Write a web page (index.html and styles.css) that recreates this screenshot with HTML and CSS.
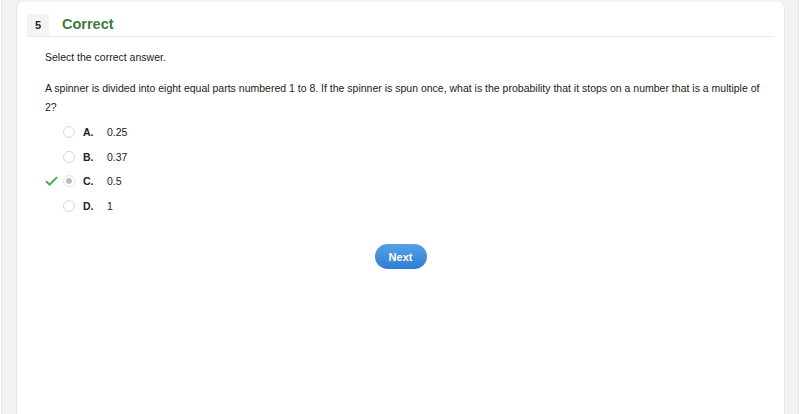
FILE: index.html
```html
<!DOCTYPE html>
<html>
<head>
<meta charset="utf-8">
<link rel="stylesheet" href="styles.css">
</head>
<body>
<div class="frame">
  <div class="card">
    <div class="header">
      <div class="num">5</div>
      <div class="status">Correct</div>
    </div>
    <div class="content">
      <p class="prompt">Select the correct answer.</p>
      <p class="question">A spinner is divided into eight equal parts numbered 1 to 8. If the spinner is spun once, what is the probability that it stops on a number that is a multiple of 2?</p>
      <div class="options">
        <div class="opt"><span class="mark"></span><span class="radio"></span><span class="letter">A.</span><span class="val">0.25</span></div>
        <div class="opt"><span class="mark"></span><span class="radio"></span><span class="letter">B.</span><span class="val">0.37</span></div>
        <div class="opt"><span class="mark"><svg width="13" height="10" viewBox="0 0 13 10"><path d="M1 5.2 L4.6 8.6 L12 1.2" fill="none" stroke="#4caf50" stroke-width="2"/></svg></span><span class="radio checked"></span><span class="letter">C.</span><span class="val">0.5</span></div>
        <div class="opt"><span class="mark"></span><span class="radio"></span><span class="letter">D.</span><span class="val">1</span></div>
      </div>
      <div class="actions"><button class="next">Next</button></div>
    </div>
  </div>
</div>
</body>
</html>
```
FILE: styles.css
```css
html, body {
  margin: 0;
  padding: 0;
  height: 100%;
  overflow: hidden;
}
body {
  background: #ffffff;
  font-family: "Liberation Sans", Arial, sans-serif;
  color: #222;
}
.frame {
  margin: 0 1px;
  height: 414px;
  background: #f2f2f2;
  border-left: 1px solid #e4e4e4;
  border-right: 1px solid #e4e4e4;
  padding: 2px 13px 0 14px;
  box-sizing: border-box;
  overflow: hidden;
}
.card {
  background: #fff;
  height: 440px;
  border-radius: 6px 6px 0 0;
  border-left: 1px solid #e6e6e6;
  border-right: 1px solid #e6e6e6;
  padding: 12px 10px 0 10px;
}
.header {
  display: flex;
  align-items: center;
  height: 22px;
  border-bottom: 1px solid #e8e8e8;
}
.num {
  width: 22px;
  height: 22px;
  background: #f3f3f3;
  font-weight: bold;
  font-size: 11px;
  display: flex;
  align-items: center;
  justify-content: center;
  color: #222;
}
.status {
  margin-left: 13px;
  margin-top: -3px;
  color: #3b7c3b;
  font-weight: bold;
  font-size: 14.5px;
}
.content {
  padding-left: 18px;
  padding-right: 8px;
}
.prompt {
  margin: 13px 0 0 0;
  font-size: 10.5px;
  line-height: 15px;
}
.question {
  margin: 14px 0 0 0;
  font-size: 10.5px;
  line-height: 19px;
}
.options {
  margin-top: 3px;
  display: flex;
  flex-direction: column;
}
.opt {
  display: flex;
  align-items: center;
  height: 24.6px;
  font-size: 10.5px;
}
.mark {
  width: 18px;
  display: flex;
  align-items: center;
}
.radio {
  width: 12px;
  height: 12px;
  border: 1px solid #d8d8d8;
  border-radius: 50%;
  box-sizing: border-box;
  background: #fff;
}
.radio.checked {
  border-color: #e4e4e4;
  background: radial-gradient(circle, #bdbdbd 0 2.6px, #fff 3.2px);
}
.letter {
  margin-left: 8px;
  width: 24px;
  font-weight: bold;
}
.actions {
  display: flex;
  justify-content: center;
  margin-top: 26px;
  padding-left: 2px;
  padding-right: 12px;
}
.next {
  width: 52px;
  height: 25px;
  border: none;
  border-radius: 13px;
  background: linear-gradient(#55a1e6, #2f7fd2);
  color: #fff;
  font-family: "Liberation Sans", Arial, sans-serif;
  font-weight: bold;
  font-size: 11px;
  padding: 0;
}
```
